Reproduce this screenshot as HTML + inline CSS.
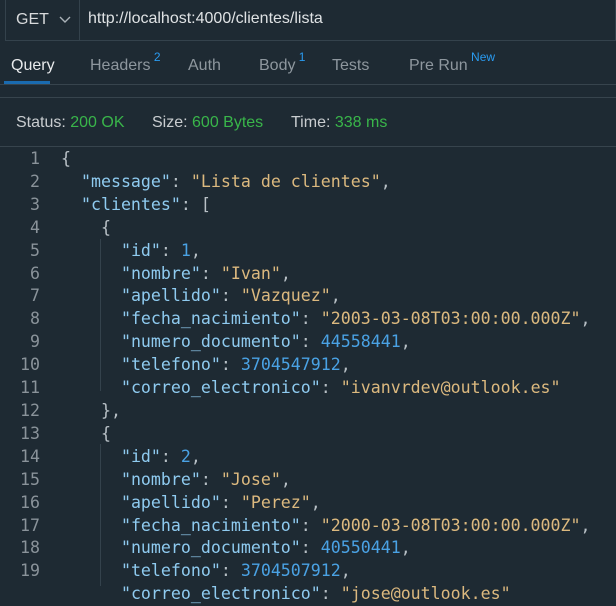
<!DOCTYPE html><html><head><style>
body{margin:0;width:616px;height:586px;background:#1e2a33;overflow:hidden;font-family:"Liberation Sans",sans-serif;color:#c8ccd0}
.top{position:absolute;left:5px;top:0;width:611px;height:41px;border:1px solid #34424c;border-top:none;box-sizing:border-box}
.get{position:absolute;left:0;top:0;width:74px;height:40px;border-right:1px solid #34424c;font-size:16px;color:#d8dadc;line-height:40px;padding-left:10px;box-sizing:border-box}
.url{position:absolute;left:82px;top:0;line-height:38px;font-size:16px;color:#dfe2e4}
.tab{position:absolute;top:56px;font-size:16px;line-height:19px;color:#8e979e}
sup{color:#2a9bf0;font-size:12px;vertical-align:baseline;position:relative;top:-9px;line-height:0}
.hl{position:absolute;left:0;width:616px;height:1px;background:#37444d}
.st{position:absolute;top:114px;font-size:16px;color:#c9cdd0}
.g{color:#39b54a}
.code{position:absolute;top:148px;left:0;font-family:"DejaVu Sans Mono",monospace;font-size:16.6px;line-height:22.9px;white-space:pre;color:#b8c0c6}
.ln{position:absolute;top:0;left:0;width:40px;text-align:right;color:#8a939a}
.tx{position:absolute;top:0;left:61px}
.k{color:#8fcbf0}.s{color:#dcb97f}.n{color:#4aa2e4}
</style></head><body>
<div class="top"><div class="get">GET <svg style="position:absolute;left:53px;top:16px" width="12" height="8" viewBox="0 0 12 8"><path d="M1 1l5 5 5-5" fill="none" stroke="#aab2b8" stroke-width="1.4"/></svg></div><div class="url">http://localhost:4000/clientes/lista</div></div>
<div class="tab" style="left:11px;color:#e8eaec">Query</div>
<div style="position:absolute;left:4px;top:81px;width:46px;height:3px;background:#1a6bb0"></div>
<div class="tab" style="left:90px">Headers<sup> 2</sup></div>
<div class="tab" style="left:188px">Auth</div>
<div class="tab" style="left:259px">Body<sup> 1</sup></div>
<div class="tab" style="left:332px">Tests</div>
<div class="tab" style="left:409px">Pre Run<sup> New</sup></div>
<div class="hl" style="top:84px"></div>
<div class="hl" style="top:97px"></div>
<div class="st" style="left:16px">Status: <span class="g">200 OK</span></div>
<div class="st" style="left:152px">Size: <span class="g">600 Bytes</span></div>
<div class="st" style="left:291px">Time: <span class="g">338 ms</span></div>
<div class="hl" style="top:146px"></div>
<div class="code"><div class="ln">1
2
3
4
5
6
7
8
9
10
11
12
13
14
15
16
17
18
19</div><div class="tx">{
  <span class="k">"message"</span>: <span class="s">"Lista de clientes"</span>,
  <span class="k">"clientes"</span>: [
    {
      <span class="k">"id"</span>: <span class="n">1</span>,
      <span class="k">"nombre"</span>: <span class="s">"Ivan"</span>,
      <span class="k">"apellido"</span>: <span class="s">"Vazquez"</span>,
      <span class="k">"fecha_nacimiento"</span>: <span class="s">"2003-03-08T03:00:00.000Z"</span>,
      <span class="k">"numero_documento"</span>: <span class="n">44558441</span>,
      <span class="k">"telefono"</span>: <span class="n">3704547912</span>,
      <span class="k">"correo_electronico"</span>: <span class="s">"ivanvrdev@outlook.es"</span>
    },
    {
      <span class="k">"id"</span>: <span class="n">2</span>,
      <span class="k">"nombre"</span>: <span class="s">"Jose"</span>,
      <span class="k">"apellido"</span>: <span class="s">"Perez"</span>,
      <span class="k">"fecha_nacimiento"</span>: <span class="s">"2000-03-08T03:00:00.000Z"</span>,
      <span class="k">"numero_documento"</span>: <span class="n">40550441</span>,
      <span class="k">"telefono"</span>: <span class="n">3704507912</span>,
      <span class="k">"correo_electronico"</span>: <span class="s">"jose@outlook.es"</span></div></div>
<div style="position:absolute;left:100px;top:239px;width:1px;height:152px;background:#34424c"></div>
<div style="position:absolute;left:100px;top:444px;width:1px;height:142px;background:#34424c"></div>
</body></html>
